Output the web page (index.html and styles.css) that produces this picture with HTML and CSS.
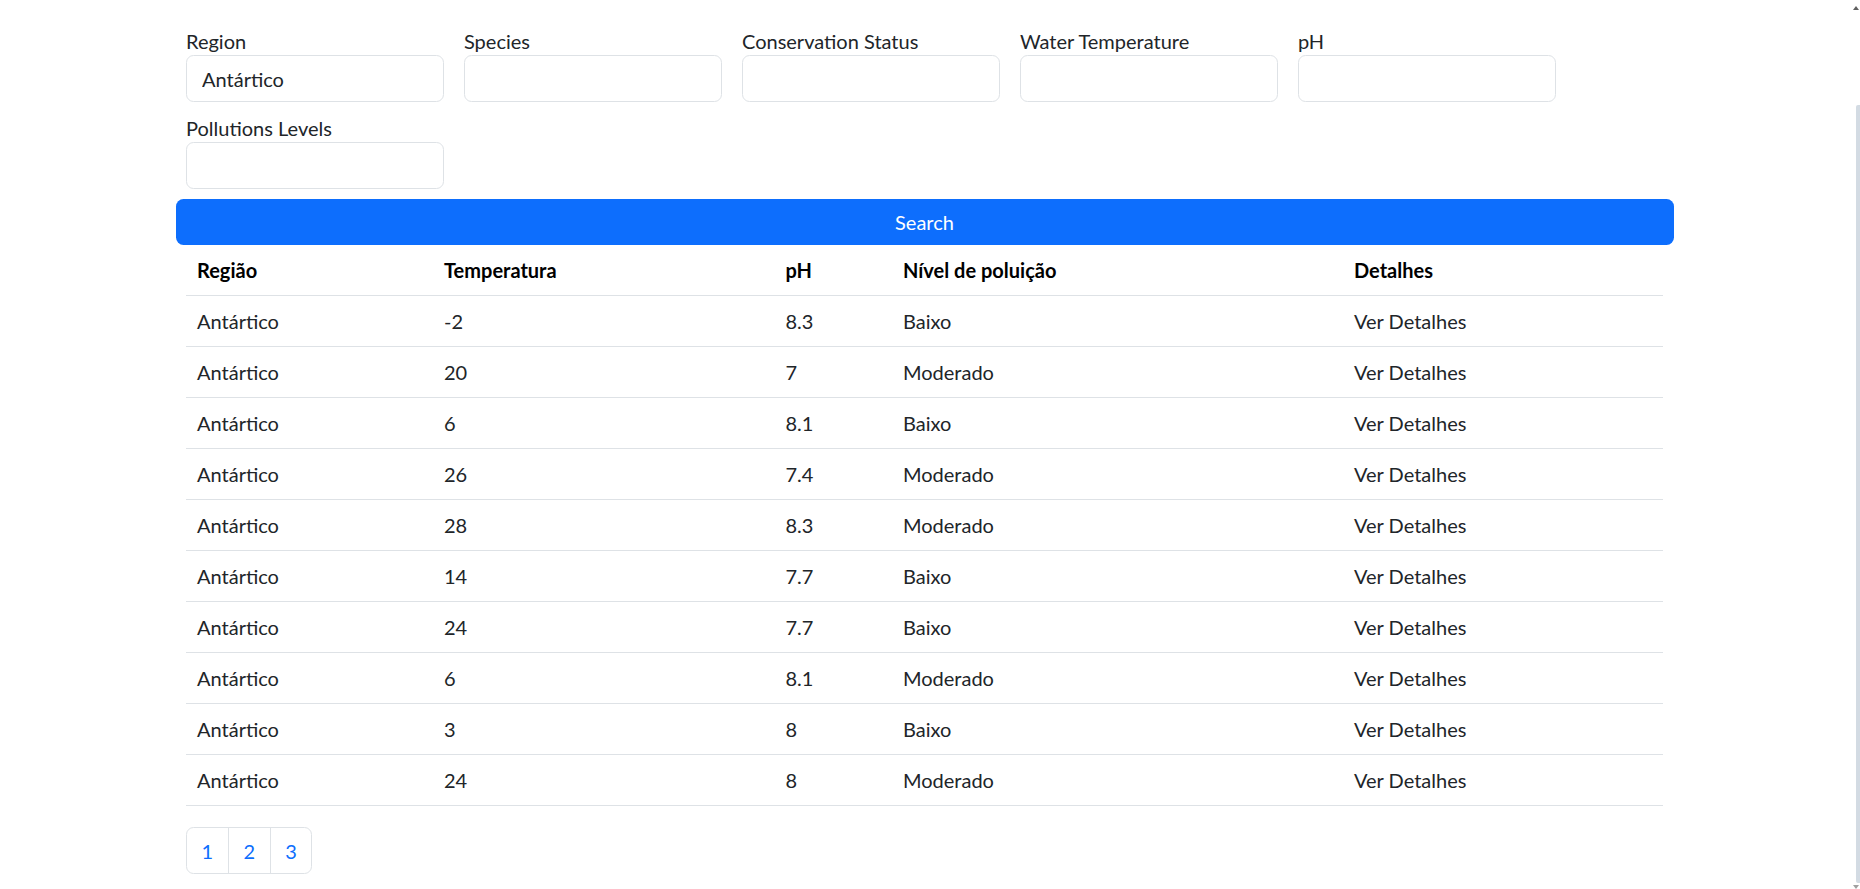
FILE: index.html
```html
<!DOCTYPE html>
<html lang="pt">
<head>
<meta charset="utf-8">
<title>Ocean Data</title>
<link rel="stylesheet" href="styles.css">
</head>
<body>
<div class="container">
  <form class="filters">
    <div class="field"><label>Region</label><input class="control" type="text" value="Antártico"></div>
    <div class="field"><label>Species</label><input class="control" type="text"></div>
    <div class="field"><label>Conservation Status</label><input class="control" type="text"></div>
    <div class="field"><label>Water Temperature</label><input class="control" type="text"></div>
    <div class="field"><label>pH</label><input class="control" type="text"></div>
    <div class="field"><label>Pollutions Levels</label><input class="control" type="text"></div>
  </form>
  <button class="search-btn" type="button">Search</button>
  <table class="data">
    <thead>
      <tr><th class="c1">Região</th><th class="c2">Temperatura</th><th class="c3">pH</th><th class="c4">Nível de poluição</th><th class="c5">Detalhes</th></tr>
    </thead>
    <tbody>
      <tr><td>Antártico</td><td>-2</td><td>8.3</td><td>Baixo</td><td>Ver Detalhes</td></tr>
      <tr><td>Antártico</td><td>20</td><td>7</td><td>Moderado</td><td>Ver Detalhes</td></tr>
      <tr><td>Antártico</td><td>6</td><td>8.1</td><td>Baixo</td><td>Ver Detalhes</td></tr>
      <tr><td>Antártico</td><td>26</td><td>7.4</td><td>Moderado</td><td>Ver Detalhes</td></tr>
      <tr><td>Antártico</td><td>28</td><td>8.3</td><td>Moderado</td><td>Ver Detalhes</td></tr>
      <tr><td>Antártico</td><td>14</td><td>7.7</td><td>Baixo</td><td>Ver Detalhes</td></tr>
      <tr><td>Antártico</td><td>24</td><td>7.7</td><td>Baixo</td><td>Ver Detalhes</td></tr>
      <tr><td>Antártico</td><td>6</td><td>8.1</td><td>Moderado</td><td>Ver Detalhes</td></tr>
      <tr><td>Antártico</td><td>3</td><td>8</td><td>Baixo</td><td>Ver Detalhes</td></tr>
      <tr><td>Antártico</td><td>24</td><td>8</td><td>Moderado</td><td>Ver Detalhes</td></tr>
    </tbody>
  </table>
  <ul class="pagination">
    <li><a class="page-link first" href="#">1</a></li>
    <li><a class="page-link" href="#">2</a></li>
    <li><a class="page-link last" href="#">3</a></li>
  </ul>
</div>
<div class="scroll-up"></div>
<div class="scroll-thumb"></div>
<div class="scroll-down"></div>
</body>
</html>
```
FILE: styles.css
```css
* { box-sizing: border-box; }
html, body { margin: 0; padding: 0; background: #fff; }
body {
  font-family: Lato, "Open Sans", sans-serif;
  font-size: 20px;
  line-height: 30px;
  color: #212529;
  overflow: hidden;
}
.container {
  width: 1477px;
  margin-left: 186px;
  padding-top: 25px;
}
.filters {
  display: grid;
  grid-template-columns: repeat(5, 257.6px);
  column-gap: 20.4px;
  row-gap: 10px;
  margin: 0;
}
.field { display: flex; flex-direction: column; }
.field label { display: block; line-height: 30px; padding-top: 1px; margin-bottom: -1px; }
.control {
  height: 47px;
  border: 1px solid #dee2e6;
  border-radius: 7.5px;
  padding: 0 15px;
  font-family: inherit;
  font-size: 20px;
  color: #212529;
  background: #fff;
  outline: none;
}
.search-btn {
  display: block;
  width: calc(100% + 21px);
  margin: 10px -10.5px 0;
  height: 46px;
  border: 0;
  border-radius: 7.5px;
  background: #0d6efd;
  color: #fff;
  font-family: inherit;
  font-size: 20px;
  line-height: 30px;
  padding: 0;
}
.data {
  width: 1477px;
  border-collapse: collapse;
  margin-bottom: 21px;
  table-layout: fixed;
}
.data th, .data td {
  text-align: left;
  padding: 10px 11px;
  border-bottom: 1px solid #dee2e6;
  line-height: 30px;
}
.data th { font-weight: 700; color: #000; }
.c1 { width: 247px; }
.c2 { width: 341.5px; }
.c3 { width: 117.5px; }
.c4 { width: 451px; }
.c5 { width: 320px; }
.pagination {
  display: flex;
  list-style: none;
  margin: 0;
  padding: 0;
}
.page-link {
  display: block;
  padding: 7.5px 14.6px;
  border: 1px solid #dee2e6;
  margin-left: -1px;
  color: #0d6efd;
  text-decoration: none;
  line-height: 30px;
  text-align: center;
}
.page-link.first { margin-left: 0; border-radius: 7.5px 0 0 7.5px; }
.page-link.last { border-radius: 0 7.5px 7.5px 0; }
.scroll-thumb {
  position: fixed;
  right: 0;
  top: 105px;
  width: 4.5px;
  height: 778px;
  background: #d3dbe3;
  border-radius: 2px 0 0 2px;
}
.scroll-up {
  position: fixed;
  right: 1px;
  top: 6px;
  width: 0;
  height: 0;
  border-left: 3px solid transparent;
  border-right: 3px solid transparent;
  border-bottom: 4px solid #606060;
}
.scroll-down {
  position: fixed;
  right: 1px;
  bottom: 0;
  width: 0;
  height: 0;
  border-left: 3px solid transparent;
  border-right: 3px solid transparent;
  border-top: 4px solid #a0a0a0;
}
```
